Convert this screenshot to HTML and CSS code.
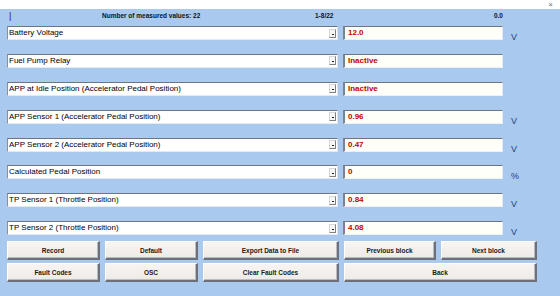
FILE: index.html
```html
<!DOCTYPE html>
<html>
<head>
<meta charset="utf-8">
<link rel="stylesheet" href="styles.css">
</head>
<body>
<div class="titlebar"><span class="close">×</span></div>
<div class="panel">
  <div class="header">
    <span class="bar">|</span>
    <span class="count">Number of measured values: 22</span>
    <span class="range">1-8/22</span>
    <span class="total">0.0</span>
  </div>
  <div class="rows">
    <div class="combo"><span class="label">Battery Voltage</span><span class="arrow"></span></div>
    <div class="value">12.0</div><div class="unit">V</div>

    <div class="combo"><span class="label">Fuel Pump Relay</span><span class="arrow"></span></div>
    <div class="value">Inactive</div><div class="unit"></div>

    <div class="combo"><span class="label">APP at Idle Position (Accelerator Pedal Position)</span><span class="arrow"></span></div>
    <div class="value">Inactive</div><div class="unit"></div>

    <div class="combo"><span class="label">APP Sensor 1 (Accelerator Pedal Position)</span><span class="arrow"></span></div>
    <div class="value">0.96</div><div class="unit">V</div>

    <div class="combo"><span class="label">APP Sensor 2 (Accelerator Pedal Position)</span><span class="arrow"></span></div>
    <div class="value">0.47</div><div class="unit">V</div>

    <div class="combo"><span class="label">Calculated Pedal Position</span><span class="arrow"></span></div>
    <div class="value">0</div><div class="unit">%</div>

    <div class="combo"><span class="label">TP Sensor 1 (Throttle Position)</span><span class="arrow"></span></div>
    <div class="value">0.84</div><div class="unit">V</div>

    <div class="combo"><span class="label">TP Sensor 2 (Throttle Position)</span><span class="arrow"></span></div>
    <div class="value">4.08</div><div class="unit">V</div>
  </div>
  <div class="buttons">
    <button class="btn">Record</button>
    <button class="btn">Default</button>
    <button class="btn">Export Data to File</button>
    <button class="btn">Previous block</button>
    <button class="btn">Next block</button>
    <button class="btn">Fault Codes</button>
    <button class="btn">OSC</button>
    <button class="btn">Clear Fault Codes</button>
    <button class="btn back">Back</button>
  </div>
</div>
</body>
</html>
```
FILE: styles.css
```css
html, body {
  margin: 0;
  padding: 0;
  width: 560px;
  height: 296px;
  overflow: hidden;
  font-family: "Liberation Sans", Arial, sans-serif;
}
.titlebar {
  height: 9px;
  background: #ffffff;
  display: flex;
  justify-content: flex-end;
  align-items: center;
  padding-right: 7px;
}
.close {
  font-size: 8px;
  line-height: 8px;
  color: #6a6a6a;
}
.panel {
  height: 287px;
  background: #a9c9ee;
  box-sizing: border-box;
  padding: 0 0 0 7px;
}
.header {
  height: 17px;
  display: grid;
  grid-template-columns: 95px 213px 60px 128px;
  align-items: center;
  font-size: 6.5px;
  font-weight: bold;
  color: #0c1426;
  box-sizing: border-box;
  padding-bottom: 4px;
}
.bar {
  font-weight: normal;
  font-size: 9px;
  padding-left: 2px;
  color: #1a2a50;
}
.count { text-align: left; }
.range { text-align: left; }
.total { text-align: right; }
.rows {
  display: grid;
  grid-template-columns: 331px 160px 40px;
  column-gap: 5px;
  grid-auto-rows: 14px;
  row-gap: 13.9px;
}
.combo {
  background: #ffffff;
  border-top: 1px solid #6e7480;
  border-left: 1px solid #8a909a;
  border-bottom: 1px solid #e6eaf0;
  border-right: 1px solid #dfe4ec;
  display: flex;
  align-items: center;
  justify-content: space-between;
  box-sizing: border-box;
  padding-left: 1px;
  font-size: 8px;
  color: #000;
}
.label {
  white-space: nowrap;
  line-height: 12px;
}
.arrow {
  width: 7px;
  height: 9px;
  margin-right: 1px;
  background: #f6f6f6;
  border: 1px solid #d8d8d8;
  border-right-color: #808080;
  border-bottom-color: #808080;
  box-sizing: border-box;
  display: flex;
  align-items: center;
  justify-content: center;
}
.arrow::after {
  content: "";
  width: 2px;
  height: 1px;
  margin-top: 2px;
  background: #202020;
}
.value {
  background: #fffffa;
  border-top: 1px solid #6e7480;
  border-left: 2px solid #7c8290;
  border-bottom: 1px solid #eef0f4;
  border-right: 1px solid #e6eaf0;
  box-sizing: border-box;
  font-size: 8px;
  font-weight: bold;
  color: #c00000;
  padding-left: 3px;
  line-height: 12px;
}
.unit {
  font-size: 9px;
  color: #1f3f7a;
  padding-left: 3px;
  padding-top: 6px;
  line-height: 10px;
}
.buttons {
  margin-top: 6px;
  display: grid;
  grid-template-columns: 93px 93px 136px 92px 96px;
  grid-auto-rows: 19px;
  column-gap: 5px;
  row-gap: 3px;
  width: 530px;
}
.btn {
  margin: 0;
  padding: 0;
  background: linear-gradient(#f7f4f2, #efeae6);
  border-top: 1px solid #ffffff;
  border-left: 1px solid #ffffff;
  border-right: 2px solid #6d7078;
  border-bottom: 2px solid #6d7078;
  box-shadow: inset -1px -1px 0 #b8bcc4;
  font-family: "Liberation Sans", Arial, sans-serif;
  font-size: 6.5px;
  font-weight: bold;
  color: #1a1a1a;
}
.back {
  grid-column: 4 / 6;
}
```
